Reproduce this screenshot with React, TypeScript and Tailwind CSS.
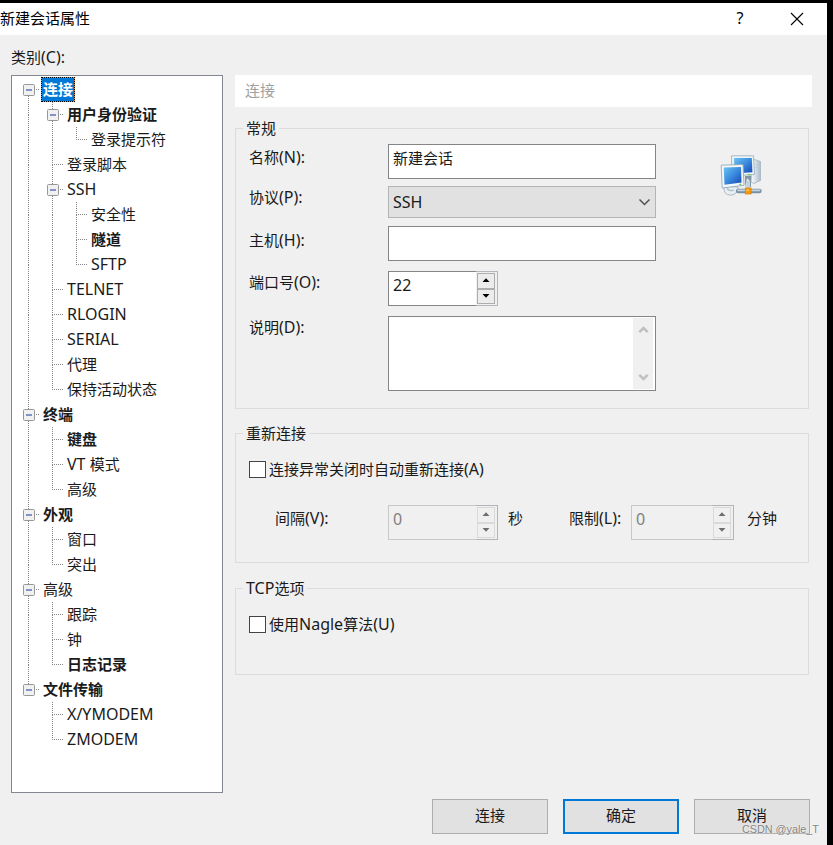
import React, { useState } from 'react';
import clsx from 'clsx';

type TreeNode = {
  label: string;
  bold?: boolean;
  children?: TreeNode[];
};

const tree: TreeNode[] = [
  {
    label: '连接',
    bold: true,
    children: [
      { label: '用户身份验证', bold: true, children: [{ label: '登录提示符' }] },
      { label: '登录脚本' },
      {
        label: 'SSH',
        children: [{ label: '安全性' }, { label: '隧道', bold: true }, { label: 'SFTP' }],
      },
      { label: 'TELNET' },
      { label: 'RLOGIN' },
      { label: 'SERIAL' },
      { label: '代理' },
      { label: '保持活动状态' },
    ],
  },
  {
    label: '终端',
    bold: true,
    children: [{ label: '键盘', bold: true }, { label: 'VT 模式' }, { label: '高级' }],
  },
  { label: '外观', bold: true, children: [{ label: '窗口' }, { label: '突出' }] },
  {
    label: '高级',
    children: [{ label: '跟踪' }, { label: '钟' }, { label: '日志记录', bold: true }],
  },
  { label: '文件传输', bold: true, children: [{ label: 'X/YMODEM' }, { label: 'ZMODEM' }] },
];

// Latin runs are set one step larger than the Chinese glyphs around them
function Txt({ children }: { children: string }) {
  return (
    <>
      {children.split(/([\x20-\x7e]+)/).map((part, i) =>
        i % 2 ? (
          <span key={i} className="text-[16px] leading-none">
            {part}
          </span>
        ) : (
          part
        )
      )}
    </>
  );
}

type GuideProps = { up?: boolean; down?: boolean; branch?: boolean; expander?: boolean };

// One 24px column of the tree: dotted connectors plus the optional [-] box
function Guide({ up, down, branch, expander }: GuideProps) {
  return (
    <svg className="w-6 h-[25px] shrink-0" viewBox="0 0 24 25" fill="none">
      <g stroke="#858585" strokeWidth={1} strokeDasharray="1 1" shapeRendering="crispEdges">
        {up && <path d="M11.5 0V13" />}
        {down && <path d="M11.5 13V25" />}
        {branch && <path d="M13 12.5H22" />}
      </g>
      {expander && (
        <>
          <rect x="6.5" y="7.5" width="11" height="11" rx="1" fill="#f1f1f1" stroke="#979797" />
          <path d="M9 13H15" stroke="#4560b0" strokeWidth={1.3} />
        </>
      )}
    </svg>
  );
}

type RowsProps = {
  nodes: TreeNode[];
  trail: boolean[];
  path: string;
  selected: string;
  onSelect: (key: string) => void;
};

function TreeRows({ nodes, trail, path, selected, onSelect }: RowsProps) {
  return (
    <>
      {nodes.map((node, i) => {
        const key = `${path}/${i}`;
        const last = i === nodes.length - 1;
        const first = trail.length === 0 && i === 0;
        return (
          <React.Fragment key={key}>
            <div className="flex h-[25px] items-center">
              {trail.map((on, t) => (
                <Guide key={t} up={on} down={on} />
              ))}
              <Guide up={!first} down={!last} branch expander={!!node.children} />
              <button
                onClick={() => onSelect(key)}
                className={clsx(
                  'h-[25px] leading-[23px] whitespace-pre border border-dotted',
                  node.bold && 'font-bold',
                  selected === key ? 'bg-[#d98a4a] border-black' : 'border-transparent'
                )}
              >
                <span className={clsx('block h-[23px] px-px', selected === key && 'bg-[#0078d7] text-white')}>
                  <Txt>{node.label}</Txt>
                </span>
              </button>
            </div>
            {node.children && (
              <TreeRows
                nodes={node.children}
                trail={[...trail, !last]}
                path={key}
                selected={selected}
                onSelect={onSelect}
              />
            )}
          </React.Fragment>
        );
      })}
    </>
  );
}

function Spinner({ value, width, disabled }: { value: string; width: string; disabled?: boolean }) {
  return (
    <div className={clsx('flex h-[35px]', width)}>
      <div
        className={clsx(
          'flex-1 border border-r-0 pl-1 pt-[2px] text-[16px] leading-[23px]',
          disabled ? 'border-[#c8c8c8] text-[#808080]' : 'border-[#858585] bg-white'
        )}
      >
        {value}
      </div>
      <div
        className={clsx(
          'w-[22px] border border-l-0 p-[1px] pr-[2px] flex flex-col',
          disabled ? 'border-[#b2b4ba]' : 'border-[#b4b6bc]'
        )}
      >
        {['M3.5 6L7 2.2L10.5 6Z', 'M3.5 2L7 5.8L10.5 2Z'].map((d) => (
          <button
            key={d}
            className={clsx(
              'flex-1 border flex items-center justify-center pb-px',
              disabled ? 'border-[#d9d9d9]' : 'border-[#adadad] bg-[#ececec]'
            )}
          >
            <svg className="w-[14px] h-[8px]" viewBox="0 0 14 8">
              <path d={d} fill={disabled ? '#6d6d6d' : '#000'} />
            </svg>
          </button>
        ))}
      </div>
    </div>
  );
}

function Group({ title, className, children }: { title: string; className: string; children: React.ReactNode }) {
  return (
    <fieldset className={clsx('w-[574px] border border-[#dcdcdc]', className)}>
      <legend className="ml-[7px] px-[3px] h-5 leading-[20px]">
        <Txt>{title}</Txt>
      </legend>
      {children}
    </fieldset>
  );
}

function ScrollArrow({ d }: { d: string }) {
  return (
    <svg className="w-[11px] h-[9px]" viewBox="0 0 11 9" fill="none" stroke="#c0c0c0" strokeWidth={2.6}>
      <path d={d} />
    </svg>
  );
}

function NetworkIcon() {
  return (
    <svg className="w-[42px] h-[42px]" viewBox="0 0 42 42">
      <defs>
        <linearGradient id="screen" x1="0" y1="0" x2="1" y2="1">
          <stop offset="0" stopColor="#6cc4f2" />
          <stop offset="0.5" stopColor="#3a8ade" />
          <stop offset="1" stopColor="#1546b8" />
        </linearGradient>
        <linearGradient id="tower" x1="0" y1="0" x2="1" y2="0">
          <stop offset="0" stopColor="#ffffff" />
          <stop offset="1" stopColor="#a9bccb" />
        </linearGradient>
      </defs>
      {/* Tower case */}
      <path d="M33 4L40.5 6.5V25.5L34 28.5L31 27Z" fill="url(#tower)" stroke="#a3b5c3" strokeWidth={0.8} />
      <path d="M35.5 9.5L39 10.3M35.5 12.5L39 13" stroke="#b5c5d0" strokeWidth={0.8} />
      {/* Back monitor */}
      <path d="M11.5 0.8H33.5L34.5 19.5L12 21Z" fill="#eef3f6" stroke="#9fb2c2" strokeWidth={0.9} />
      <path d="M14 3H31.8L32.4 17.3L14.5 18.5Z" fill="url(#screen)" />
      <path d="M25 21H31V32H25Z" fill="#8196a8" />
      <path d="M27 23L30 26V32H25Z" fill="#dce6ed" />
      {/* Front monitor */}
      <path d="M4 31.5Q3 39.5 10.5 40.2Q18 39.5 18 32Z" fill="#e9eff3" stroke="#a2b3c0" strokeWidth={0.9} />
      <path d="M7 32Q8 37 14 35" fill="none" stroke="#b5c3cd" strokeWidth={1.5} />
      <path d="M1.2 10.2L23 9.5L24 30.3L2.2 33Z" fill="#f4f8fa" stroke="#93a8b8" strokeWidth={0.9} />
      <path d="M3.7 12.5L21 12L21.5 27.5L4.5 29.7Z" fill="url(#screen)" />
      <path d="M19.3 29.5L21.3 29.2" stroke="#55c32c" strokeWidth={1.2} />
      <path d="M28.2 19.7H30.5" stroke="#55c32c" strokeWidth={1.2} />
      {/* Cable with connector */}
      <path d="M18 36H39.5" stroke="#7890a4" strokeWidth={4.4} strokeLinecap="round" />
      <path d="M18 35.3H39.5" stroke="#c5d3de" strokeWidth={1.8} strokeLinecap="round" />
      <path d="M28 26V33" stroke="#c2d0da" strokeWidth={3.5} />
      <rect x="25.3" y="33" width="5.8" height="6" fill="#f79a0e" stroke="#d97c06" strokeWidth={0.7} />
      <path d="M26.3 34.3H28.8V36H26.3Z" fill="#ffc94a" />
    </svg>
  );
}

function CheckRow({ label, className }: { label: string; className: string }) {
  const [checked, setChecked] = useState(false);
  return (
    <label className={clsx('flex items-center h-5 ml-[13px]', className)}>
      <button
        role="checkbox"
        aria-checked={checked}
        onClick={() => setChecked(!checked)}
        className="w-[17px] h-[17px] border border-[#444] bg-white leading-[14px] text-xs"
      >
        {checked ? '✓' : ''}
      </button>
      <span className="ml-[3px] h-5 leading-[21px]">
        <Txt>{label}</Txt>
      </span>
    </label>
  );
}

export default function App() {
  const [selected, setSelected] = useState('/0');
  const [name, setName] = useState('新建会话');
  const [host, setHost] = useState('');

  return (
    <div className="relative w-[833px] h-[845px] overflow-hidden bg-black pt-[3px] pr-[6px] text-[15px] text-[#1a1a1a] font-['Noto_Sans','Noto_Sans_CJK_SC',sans-serif]">
      <div className="h-[842px] bg-[#f0f0f0] flex flex-col">
        {/* Title bar */}
        <div className="h-8 bg-white flex items-center text-black">
          <span className="flex-1 leading-[20px] pb-[2px]">新建会话属性</span>
          <button className="w-[14px] mr-[43px] leading-[20px] pb-[2px] text-[16px]">?</button>
          <button className="mr-[23px]">
            <svg className="w-[14px] h-[14px]" viewBox="0 0 14 14" stroke="#000" strokeWidth={1.1}>
              <path d="M1 1L13 13M13 1L1 13" />
            </svg>
          </button>
        </div>

        <div className="flex pl-[11px]">
          {/* Category tree */}
          <div className="w-[212px]">
            <div className="h-10 pt-3 leading-[20px]">
              <Txt>类别(C):</Txt>
            </div>
            <div className="h-[718px] bg-white border border-[#828790] pt-[1px] pl-[5px]">
              <TreeRows nodes={tree} trail={[]} path="" selected={selected} onSelect={setSelected} />
            </div>
          </div>

          {/* Settings page */}
          <div className="pt-10 pl-3">
            <div className="w-[577px] h-[32px] bg-white pl-[10px] leading-[30px] text-[#a0a0a0]">连接</div>

            <Group title="常规" className="mt-[11px] h-[291px]">
              <div className="flex pt-[6px] pl-[13px]">
                <div className="flex flex-col w-[139px] leading-[20px]">
                  <span className="h-10 pt-[3px]">
                    <Txt>名称(N):</Txt>
                  </span>
                  <span className="h-[43px] pt-[3px]">
                    <Txt>协议(P):</Txt>
                  </span>
                  <span className="h-[42px] pt-[3px]">
                    <Txt>主机(H):</Txt>
                  </span>
                  <span className="h-[45px] pt-[3px]">
                    <Txt>端口号(O):</Txt>
                  </span>
                  <span className="h-10 pt-[3px]">
                    <Txt>说明(D):</Txt>
                  </span>
                </div>
                <div className="flex flex-col w-[268px]">
                  <input
                    value={name}
                    onChange={(e) => setName(e.target.value)}
                    className="h-[35px] border border-[#858585] bg-white pl-1 pb-[9px] outline-none"
                  />
                  <div className="mt-[7px] h-[32px] border border-[#b4b4b4] bg-[#e1e1e1] pl-1 pr-[4px] flex items-center justify-between">
                    <span className="leading-[20px] text-[16px] pb-px">SSH</span>
                    <svg className="w-[13px] h-[8px]" viewBox="0 0 13 8" fill="none" stroke="#505050">
                      <path d="M1.5 1.5L6.5 6.5L11.5 1.5" strokeWidth={1.5} />
                    </svg>
                  </div>
                  <input
                    value={host}
                    onChange={(e) => setHost(e.target.value)}
                    className="mt-[8px] h-[35px] border border-[#858585] bg-white pl-1 outline-none"
                  />
                  <div className="mt-[10px]">
                    <Spinner value="22" width="w-[110px]" />
                  </div>
                  <div className="mt-[10px] h-[75px] border border-[#858585] bg-white p-[1px] flex justify-end">
                    <div className="w-5 mr-px bg-[#f0f0f0] flex flex-col items-center justify-between py-[7px]">
                      <ScrollArrow d="M1.3 7.2L5.5 3L9.7 7.2" />
                      <ScrollArrow d="M1.3 1.8L5.5 6L9.7 1.8" />
                    </div>
                  </div>
                </div>
                <div className="pl-[64px] pt-[11px]">
                  <NetworkIcon />
                </div>
              </div>
            </Group>

            <Group title="重新连接" className="mt-[14px] h-[140px]">
              <CheckRow label="连接异常关闭时自动重新连接(A)" className="mt-[16px]" />
              <div className="mt-[26px] pl-[39px] flex leading-[20px]">
                <span className="w-[113px] pt-[3px]">
                  <Txt>间隔(V):</Txt>
                </span>
                <Spinner value="0" width="w-[110px]" disabled />
                <span className="w-[71px] pl-[10px] pt-[3px]">秒</span>
                <span className="w-[62px] pt-[3px]">
                  <Txt>限制(L):</Txt>
                </span>
                <Spinner value="0" width="w-[103px]" disabled />
                <span className="pl-[13px] pt-[3px]">分钟</span>
              </div>
            </Group>

            <Group title="TCP选项" className="mt-[15px] h-[97px]">
              <CheckRow label="使用Nagle算法(U)" className="mt-[16px]" />
            </Group>
          </div>
        </div>

        {/* Dialog buttons */}
        <div className="mt-[6px] pl-[432px] flex gap-[15px]">
          <button className="w-[116px] h-[35px] pb-[2px] border border-[#adadad] bg-[#e1e1e1]">连接</button>
          <button className="w-[116px] h-[35px] pb-[2px] border-2 border-[#0078d7] bg-[#e1e1e1]">确定</button>
          <button className="w-[116px] h-[35px] pb-[2px] border border-[#adadad] bg-[#e1e1e1]">取消</button>
        </div>
      </div>

      <span className="absolute left-[742px] top-[822px] text-[10.8px] leading-[15px] whitespace-nowrap text-[#858585] [text-shadow:0_0_2px_#fff] font-['Liberation_Sans',sans-serif]">
        CSDN @yale_T
      </span>
    </div>
  );
}
